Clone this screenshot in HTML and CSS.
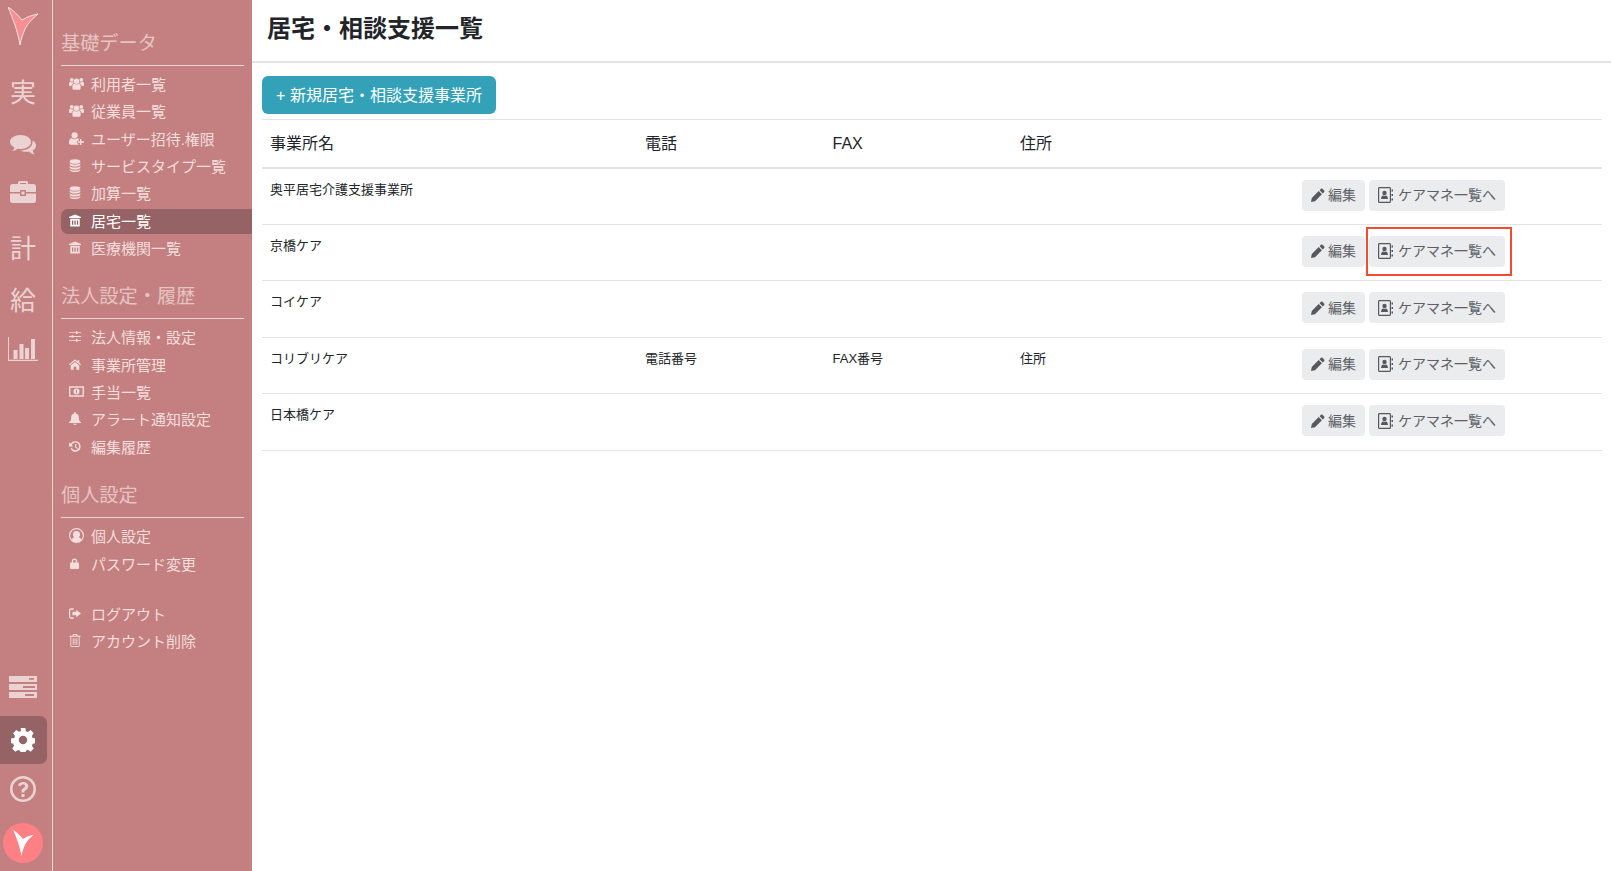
FILE: index.html
```html
<!DOCTYPE html>
<html lang="ja">
<head>
<meta charset="utf-8">
<title>居宅・相談支援一覧</title>
<link rel="stylesheet" href="styles.css">
</head>
<body>
<svg class="sprite" aria-hidden="true">
  <symbol id="i-users" viewBox="0 0 16 14"><circle cx="8" cy="4.6" r="2.9"/><circle cx="2.9" cy="3" r="2"/><circle cx="13.1" cy="3" r="2"/><path d="M3.6 9.6c0-1.6 1.3-2.3 2.2-2.3.6.5 1.4.8 2.2.8s1.600-.3 2.200-.8c.9 0 2.200.7 2.200 2.300v2.400c0 1-.7 1.600-1.600 1.600H5.200c-.9 0-1.600-.6-1.600-1.600z"/><path d="M0 7.200C0 6 .6 5.200 1.500 5.200c.5.400 1 .6 1.700.6.500 0 .9-.1 1.200-.3.100.5.300.900.700 1.300-1.200.4-2.200 1.400-2.400 2.800H1C.4 9.600 0 9.200 0 8.500zM16 7.200c0-1.200-.6-2-1.500-2-.5.400-1 .6-1.700.6-.5 0-.9-.1-1.200-.3-.1.500-.3.900-.7 1.300 1.200.4 2.200 1.400 2.400 2.800H15c.6 0 1-.4 1-1.100z"/></symbol>
  <symbol id="i-userplus" viewBox="0 0 16 14"><circle cx="6" cy="3.600" r="3.300"/><path d="M0 11c0-2.800 1.300-4.200 2.900-4.200.8.700 1.900 1.100 3.100 1.100s2.300-.4 3.100-1.100c.5 0 1 .2 1.400.4v2.100H8.500v2.900h1.700V13.600H1.800C.7 13.600 0 12.900 0 11.800z"/><path d="M11.700 7.600h1.600v2.400h2.700v1.600h-2.700V14h-1.600v-2.400H9.300V10h2.400z"/></symbol>
  <symbol id="i-db" viewBox="0 0 14 16"><ellipse cx="7" cy="3" rx="6.500" ry="2.800"/><path d="M.5 4.800C1.500 6.200 4 6.800 7 6.800s5.500-.6 6.500-2v2.200C13 8.400 10.400 9.200 7 9.200S1 8.400.5 7zM.5 8.600C1.500 10 4 10.500 7 10.500s5.500-.5 6.500-1.900v2.200c-.5 1.400-3.100 2.200-6.500 2.200S1 12.200.5 10.800zM.5 12.200c1 1.400 3.500 1.900 6.500 1.900s5.500-.5 6.500-1.900v1.300C13 15 10.400 16 7 16s-6-1-6.500-2.500z"/></symbol>
  <symbol id="i-bank" viewBox="0 0 14 14"><path d="M7 0l7 3v1.200H0V3z"/><path fill-rule="evenodd" d="M1.500 5h11v9h-11zM3.500 7v5h1.500V7zM6.300 7v5h1.500V7zM9.200 7v5h1.500V7z"/></symbol>
  <symbol id="i-sliders" viewBox="0 0 14 14"><path d="M0 2h8V1h2v1h4v1h-4v1H8V3H0zM0 6.500h3v-1h2v1h9v1H5v1H3v-1H0zM0 11h8v-1h2v1h4v1h-4v1H8v-1H0z"/></symbol>
  <symbol id="i-home" viewBox="0 0 14 12"><path d="M7 0l3 2.500V1h2v3.200L14 6l-.8 1L7 2 .8 7 0 6z"/><path d="M7 3.200l5 4V12H8.500V8.500h-3V12H2V7.200z"/></symbol>
  <symbol id="i-money" viewBox="0 0 16 11"><path fill-rule="evenodd" d="M0 0h16v11H0zM1.500 1.500v8h13v-8zM8 2.300a3.200 3.200 0 1 1 0 6.400 3.200 3.200 0 0 1 0-6.400z"/><path d="M7.500 4h1v3.400h-1z" fill="#c48080"/></symbol>
  <symbol id="i-bell" viewBox="0 0 14 15"><path d="M7 0c.6 0 1 .4 1 1v.8c2.200.4 3.500 2.200 3.500 4.700 0 2.800.8 4 2.500 5.500v.8H0V12c1.700-1.500 2.500-2.700 2.500-5.500C2.500 4 3.800 2.200 6 1.800V1c0-.6.400-1 1-1zM5 13.600h4c0 .8-.9 1.400-2 1.400s-2-.6-2-1.400z"/></symbol>
  <symbol id="i-history" viewBox="0 0 14 14"><path d="M7.500 1A6 6 0 1 1 2 9.500l1.400-.8A4.400 4.400 0 1 0 3.200 5.600L5 7H0V2l2 1.800A6 6 0 0 1 7.500 1z"/><path d="M7 4h1.400v3.400L10.400 9l-.8 1L7 8z"/></symbol>
  <symbol id="i-usercircle" viewBox="0 0 14 14"><path fill-rule="evenodd" d="M7 0a7 7 0 1 1 0 14A7 7 0 0 1 7 0zm0 1.200a5.800 5.800 0 0 0-4.400 9.600C3 9.500 4 8.800 5 8.600c-.8-.5-1.300-1.400-1.300-2.400a3.300 3.300 0 0 1 6.600 0c0 1-.5 1.900-1.300 2.400 1 .2 2 .9 2.400 2.200A5.800 5.800 0 0 0 7 1.200z"/></symbol>
  <symbol id="i-lock" viewBox="0 0 10 12"><path fill-rule="evenodd" d="M2 5V3.500C2 1.600 3.200.5 5 .5s3 1.100 3 3V5h1c.6 0 1 .4 1 1v5c0 .6-.4 1-1 1H1c-.6 0-1-.4-1-1V6c0-.6.4-1 1-1zm1.500 0h3V3.500C6.500 2.500 6 2 5 2s-1.500.5-1.500 1.500z"/></symbol>
  <symbol id="i-signout" viewBox="0 0 14 12"><path d="M5.500 0v1.500H2.600c-.6 0-1.100.5-1.100 1.100v6.800c0 .6.500 1.100 1.100 1.100h2.900V12H2.500C1.100 12 0 10.900 0 9.500v-7C0 1.100 1.100 0 2.500 0z"/><path d="M8.500 1.500L14 6l-5.500 4.500V8H4V4h4.500z"/></symbol>
  <symbol id="i-trash" viewBox="0 0 12 14"><path fill-rule="evenodd" d="M4 0h4l1 2h3v1h-1v9.500c0 .9-.6 1.500-1.400 1.500H2.400C1.600 14 1 13.400 1 12.500V3H0V2h3zm.9 1L4.500 2h3l-.4-1zM2 3v9.500c0 .3.200.5.400.5h7.200c.2 0 .4-.2.400-.5V3zm1.500 1.500h1v7h-1zm2 0h1v7h-1zm2 0h1v7h-1z"/></symbol>
  <symbol id="i-pencil" viewBox="0 0 14 14"><path d="M10 .8c.4-.4 1-.4 1.400 0l1.800 1.800c.4.400.4 1 0 1.400l-1.400 1.400-3.200-3.200zM7.700 3.100l3.200 3.200L4 13.200 0 14l.8-4z"/></symbol>
  <symbol id="i-book" viewBox="0 0 15 16"><path fill-rule="evenodd" d="M1.500 0h10c.8 0 1.500.7 1.500 1.500v13c0 .8-.7 1.500-1.500 1.500h-10C.7 16 0 15.300 0 14.500v-13C0 .7.7 0 1.500 0zm0 1.200a.3.3 0 0 0-.3.300v13c0 .2.100.3.300.3h10a.3.3 0 0 0 .3-.3v-13a.3.3 0 0 0-.3-.3z"/><circle cx="6.500" cy="6" r="2.200"/><path d="M3 12c0-2 1-3.300 2.200-3.500.8.500 1.800.5 2.600 0C9 8.700 10 10 10 12z"/><path d="M13.500 2.500h1.500v2h-1.500zM13.500 7h1.500v2h-1.500zM13.500 11.500h1.500v2h-1.500z"/></symbol>
  <symbol id="i-chat" viewBox="0 0 26 21"><path d="M10.500 0C16.300 0 21 3 21 7s-4.700 7-10.500 7c-1 0-1.900-.1-2.800-.3C6.300 14.900 4.500 15.600 2.300 16c1-1.100 1.700-2.200 2-3.600C1.700 11.200 0 9.200 0 7c0-4 4.700-7 10.500-7z"/><path d="M22.500 5.500c2.200 1.200 3.500 2.900 3.500 5 0 2.100-1.300 3.900-3.400 5 .3 1.500 1 2.600 2 3.900-2.200-.4-4.200-1.400-5.600-2.900-1 .2-1.800.3-2.800.3-2.300 0-4.400-.5-6-1.400 6.500.4 13-2.800 12.300-9.900z"/></symbol>
  <symbol id="i-brief" viewBox="0 0 26 22"><path fill-rule="evenodd" d="M8 3V1.800C8 .8 8.800 0 9.800 0h6.400C17.200 0 18 .8 18 1.800V3h5.500C24.900 3 26 4.100 26 5.500V11H16V9h-6v2H0V5.500C0 4.100 1.100 3 2.500 3zm2 0h6V2h-6z"/><path d="M0 12.500h10v2.500h6v-2.500h10v7c0 1.400-1.100 2.500-2.500 2.500h-21C1.100 22 0 20.900 0 19.500zM11.500 10.500h3v3h-3z"/></symbol>
  <symbol id="i-chart" viewBox="0 0 30 24"><path d="M0 0h1v22.800h29V24H0z"/><path d="M5.500 13h4v9h-4zM11.500 7h4v15h-4zM17 11h4v11h-4zM23 2h4v20h-4z"/></symbol>
  <symbol id="i-server" viewBox="0 0 28 22"><path fill-rule="evenodd" d="M0 0h28v6H0zm20 2v1.800h5V2zM0 8h28v6H0zm14 2v2h12v-2zM0 16h28v6H0zm16 2v2h9v-2z"/></symbol>
  <symbol id="i-gear" viewBox="0 0 24 24"><path fill-rule="evenodd" d="M9.700 0h4.600l.6 3.200 2 .8L19.700 2l3 3.300-1.900 2.600.9 2 3.300.6v4.600l-3.200.6-.9 2 1.900 2.800-3.200 3.200-2.700-1.900-2 .9-.6 3.300H9.700l-.6-3.300-2-.8-2.700 1.900-3.200-3.200 1.900-2.800-.9-2L-.1 15v-4.500l3.300-.6.800-2-1.900-2.700 3.200-3.200L8 3.800l2-.8zM12 7.800a4.200 4.200 0 1 0 0 8.400 4.200 4.200 0 0 0 0-8.400z"/></symbol>
  <symbol id="i-help" viewBox="0 0 26 26"><path fill-rule="evenodd" d="M13 0a13 13 0 1 1 0 26 13 13 0 0 1 0-26zm0 2.500a10.500 10.500 0 1 0 0 21 10.500 10.500 0 0 0 0-21z"/><path d="M13.300 6c3 0 5 1.700 5 4.200 0 2-1.200 3-2.400 3.800-1 .6-1.400 1-1.400 1.900v.6h-3v-1c0-1.800.8-2.700 2-3.500 1-.6 1.700-1.100 1.700-2 0-1-.9-1.600-2-1.600-1.200 0-2 .6-2.500 1.900L8 9.200C8.800 7.200 10.600 6 13.300 6zM11.500 18h3v3h-3z"/></symbol>
  <symbol id="i-logo" viewBox="0 0 30 38"><path d="M0 0C5 3 10 8 14 13 19 10 24 8 30 7 25 11 20 16 17 22 15 27 13 32 12 38 10 25 5 12 0 0z"/></symbol>
</svg>

<div class="app">
  <nav class="rail">
    <div class="rail-top">
      <svg class="logo"><use href="#i-logo"/></svg>
      <span class="rail-kanji r-first">実</span>
      <svg class="rail-icon chat"><use href="#i-chat"/></svg>
      <svg class="rail-icon brief"><use href="#i-brief"/></svg>
      <span class="rail-kanji r-kei">計</span>
      <span class="rail-kanji r-kyu">給</span>
      <svg class="rail-icon chart"><use href="#i-chart"/></svg>
    </div>
    <div class="rail-bottom">
      <svg class="rail-icon server"><use href="#i-server"/></svg>
      <div class="rail-active"><svg class="gear"><use href="#i-gear"/></svg></div>
      <svg class="rail-icon help"><use href="#i-help"/></svg>
      <div class="avatar"><svg class="avatar-logo"><use href="#i-logo"/></svg></div>
    </div>
  </nav>

  <aside class="side">
    <h3 class="side-head">基礎データ</h3>
    <ul class="menu">
      <li class="item"><svg class="ico"><use href="#i-users"/></svg>利用者一覧</li>
      <li class="item"><svg class="ico"><use href="#i-users"/></svg>従業員一覧</li>
      <li class="item"><svg class="ico"><use href="#i-userplus"/></svg>ユーザー招待.権限</li>
      <li class="item"><svg class="ico ico-s"><use href="#i-db"/></svg>サービスタイプ一覧</li>
      <li class="item"><svg class="ico ico-s"><use href="#i-db"/></svg>加算一覧</li>
      <li class="item active"><svg class="ico ico-s"><use href="#i-bank"/></svg>居宅一覧</li>
      <li class="item"><svg class="ico ico-s"><use href="#i-bank"/></svg>医療機関一覧</li>
    </ul>
    <h3 class="side-head">法人設定・履歴</h3>
    <ul class="menu">
      <li class="item"><svg class="ico ico-s"><use href="#i-sliders"/></svg>法人情報・設定</li>
      <li class="item"><svg class="ico ico-s"><use href="#i-home"/></svg>事業所管理</li>
      <li class="item"><svg class="ico"><use href="#i-money"/></svg>手当一覧</li>
      <li class="item"><svg class="ico ico-s"><use href="#i-bell"/></svg>アラート通知設定</li>
      <li class="item"><svg class="ico ico-s"><use href="#i-history"/></svg>編集履歴</li>
    </ul>
    <h3 class="side-head">個人設定</h3>
    <ul class="menu">
      <li class="item"><svg class="ico"><use href="#i-usercircle"/></svg>個人設定</li>
      <li class="item"><svg class="ico ico-xs"><use href="#i-lock"/></svg>パスワード変更</li>
    </ul>
    <ul class="menu menu-last">
      <li class="item"><svg class="ico ico-s"><use href="#i-signout"/></svg>ログアウト</li>
      <li class="item"><svg class="ico ico-s"><use href="#i-trash"/></svg>アカウント削除</li>
    </ul>
  </aside>

  <main class="main">
    <header class="top"><h1 class="title">居宅・相談支援一覧</h1></header>
    <div class="content">
      <button class="new-btn">+ 新規居宅・相談支援事業所</button>
      <table class="list">
        <colgroup><col class="c-name"><col class="c-s"><col class="c-s"><col class="c-s"><col></colgroup>
        <thead><tr><th>事業所名</th><th>電話</th><th>FAX</th><th>住所</th><th></th></tr></thead>
        <tbody>
          <tr><td>奥平居宅介護支援事業所</td><td></td><td></td><td></td>
            <td class="acts"><div class="acts-in"><a class="btn"><svg class="b-ico"><use href="#i-pencil"/></svg>編集</a><a class="btn"><svg class="b-ico book"><use href="#i-book"/></svg>ケアマネ一覧へ</a></div></td></tr>
          <tr><td>京橋ケア</td><td></td><td></td><td></td>
            <td class="acts"><div class="acts-in"><a class="btn"><svg class="b-ico"><use href="#i-pencil"/></svg>編集</a><a class="btn marked"><svg class="b-ico book"><use href="#i-book"/></svg>ケアマネ一覧へ</a></div></td></tr>
          <tr><td>コイケア</td><td></td><td></td><td></td>
            <td class="acts"><div class="acts-in"><a class="btn"><svg class="b-ico"><use href="#i-pencil"/></svg>編集</a><a class="btn"><svg class="b-ico book"><use href="#i-book"/></svg>ケアマネ一覧へ</a></div></td></tr>
          <tr><td>コリブリケア</td><td>電話番号</td><td>FAX番号</td><td>住所</td>
            <td class="acts"><div class="acts-in"><a class="btn"><svg class="b-ico"><use href="#i-pencil"/></svg>編集</a><a class="btn"><svg class="b-ico book"><use href="#i-book"/></svg>ケアマネ一覧へ</a></div></td></tr>
          <tr><td>日本橋ケア</td><td></td><td></td><td></td>
            <td class="acts"><div class="acts-in"><a class="btn"><svg class="b-ico"><use href="#i-pencil"/></svg>編集</a><a class="btn"><svg class="b-ico book"><use href="#i-book"/></svg>ケアマネ一覧へ</a></div></td></tr>
        </tbody>
      </table>
    </div>
  </main>
</div>
</body>
</html>
```

FILE: styles.css
```css
* { box-sizing: border-box; }
html, body { margin: 0; height: 100%; overflow: hidden; }
body {
  font-family: "Liberation Sans", "Noto Sans CJK JP", sans-serif;
  color: #212529;
  background: #fff;
}
.sprite { display: none; }
.app { display: flex; height: 871px; }

/* icon rail */
.rail {
  width: 53px;
  flex: none;
  background: #c48080;
  border-right: 1px solid #ecd6d6;
  display: flex;
  flex-direction: column;
  justify-content: space-between;
  color: #ecd3d3;
}
.rail-top, .rail-bottom { display: flex; flex-direction: column; align-items: center; width: 52px; }
.rail-top { padding-right: 6px; }
.logo { width: 30px; height: 38px; margin-top: 7px; fill: #f98f92; stroke: #f5e3e3; stroke-width: 1; overflow: visible; }
.rail-kanji { font-size: 26px; line-height: 36px; height: 36px; }
.r-first { margin-top: 30px; }
.r-kei { margin-top: 28px; }
.r-kyu { margin-top: 16px; }
.rail-icon { fill: currentColor; display: block; }
.chat { width: 26px; height: 21px; margin-top: 24px; }
.brief { width: 26px; height: 22px; margin-top: 25px; }
.chart { width: 30px; height: 24px; margin-top: 18px; }
.rail-bottom { padding-bottom: 8px; }
.server { width: 28px; height: 22px; margin: 0 6px 18px 0; }
.rail-active {
  width: 47px;
  height: 48px;
  margin-right: 5px;
  padding: 0 1px 1px 0;
  background: #956265;
  border-radius: 0 7px 7px 0;
  display: flex;
  align-items: center;
  justify-content: center;
}
.gear { width: 24px; height: 24px; fill: #fff; }
.help { width: 26px; height: 26px; margin: 12px 6px 0 0; }
.avatar {
  width: 40px;
  height: 40px;
  margin: 21px 6px 0 0;
  border-radius: 50%;
  background: #fd8084;
  display: flex;
  align-items: center;
  justify-content: center;
}
.avatar-logo { width: 21px; height: 26px; fill: #fff; }

/* menu sidebar */
.side {
  width: 199px;
  flex: none;
  background: #c48080;
  padding: 27px 8px 0;
}
.side-head {
  margin: 19.5px 0 6px;
  font-size: 19.2px;
  font-weight: 400;
  line-height: 34px;
  padding-bottom: 4px;
  height: 39px;
  color: #e6c4c4;
  border-bottom: 1px solid #ecd6d6;
}
.side-head:first-child { margin-top: 0; }
.menu { list-style: none; margin: 0; padding: 0; display: flex; flex-direction: column; gap: 2.33px; }
.menu-last { margin-top: 25px; }
.item {
  height: 25px;
  display: flex;
  align-items: center;
  padding: 0 0 2px 8px;
  font-size: 15px;
  color: #f3dddd;
  gap: 7px;
  margin-right: -8px;
  border-radius: 7px 0 0 7px;
}
.item.active { background: #956265; color: #fff; }
.ico { width: 15px; height: 15px; flex: none; fill: currentColor; }
.ico-s { width: 12px; height: 13px; margin-right: 3px; }
.ico-xs { width: 9px; height: 11px; margin: 0 5px 0 1px; }

/* main */
.main { flex: 1; min-width: 0; display: flex; flex-direction: column; }
.top { height: 63px; border-bottom: 2px solid #e1e3e6; padding: 12px 15px 0; }
.title { margin: 0; font-size: 24px; line-height: 34px; font-weight: 700; color: #212529; }
.content { padding: 13px 9px 0 10px; }
.new-btn {
  display: block;
  width: 234px;
  height: 38px;
  border: 0;
  border-radius: 6px;
  background: #33a2b8;
  color: #fff;
  font: 400 16px/36px "Liberation Sans", "Noto Sans CJK JP", sans-serif;
  padding: 1px 0 0;
}
.list { width: 100%; table-layout: fixed; border-collapse: collapse; margin-top: 5px; }
.c-name { width: 375px; }
.c-s { width: 187.5px; }
.list th {
  height: 48px;
  padding: 12px 8px 0;
  text-align: left;
  vertical-align: baseline;
  font-size: 16px;
  line-height: 24px;
  font-weight: 400;
  color: #212529;
  border-top: 1px solid #e1e3e6;
  border-bottom: 2px solid #e1e3e6;
}
.list td {
  height: 56.5px;
  padding: 11px 8px 0;
  vertical-align: top;
  font-size: 13px;
  line-height: 20px;
  border-bottom: 1px solid #e1e3e6;
  color: #212529;
}
.list td.acts { padding: 11px 0 0; }
.acts-in { display: flex; justify-content: flex-end; gap: 4px; padding-right: 97px; }
.btn {
  position: relative;
  display: flex;
  align-items: center;
  height: 31px;
  padding: 0 9px;
  background: #ebecee;
  border-radius: 4px;
  color: #5d6166;
  font-size: 14px;
  gap: 3px;
  white-space: nowrap;
}
.b-ico { width: 14px; height: 14px; fill: #55595e; flex: none; }
.b-ico.book { width: 15px; height: 16px; margin-right: 2px; }
.marked::after {
  content: "";
  position: absolute;
  left: -3px;
  top: -9px;
  right: -7px;
  bottom: -9px;
  border: 2px solid #f44a2f;
}
```
